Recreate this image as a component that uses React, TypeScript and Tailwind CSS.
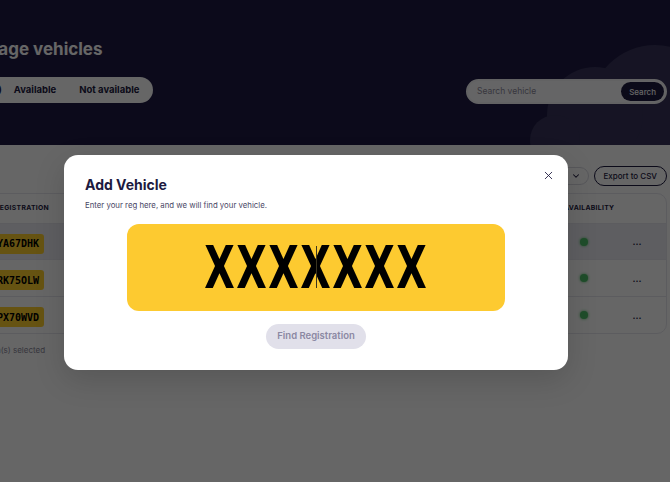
import { ChevronDown, X } from 'lucide-react';

const vehicles = [
  { reg: 'YA67DHK', active: true },
  { reg: 'RK75OLW', active: false },
  { reg: 'PX70WVD', active: false },
];

function Cloud() {
  return (
    <svg className="absolute bottom-0 right-0" width="140" height="100" viewBox="0 0 140 100">
      <g fill="#37345a">
        <circle cx="125" cy="65" r="65" />
        <circle cx="65" cy="70" r="48" />
        <circle cx="25" cy="95" r="25" />
      </g>
    </svg>
  );
}

function Header() {
  return (
    <div className="relative h-[145px] bg-[#1f1a44]">
      <Cloud />
      <div className="relative -ml-[38px] pt-[37px] pr-[3px]">
        <h1 className="text-[17px] font-bold leading-[24px] text-white">Manage vehicles</h1>
        <div className="mt-[15px] flex items-center justify-between">
          <div className="-ml-[4px] flex h-[26px] items-center gap-[23px] rounded-full bg-white pl-[16px] pr-[14px] text-[9.5px] font-bold text-[#1d1a3f]">
            <span className="-mr-[11px]">All (3)</span>
            <span>Available</span>
            <span>Not available</span>
          </div>
          <div className="mt-[3px] flex h-[25px] w-[201px] items-center justify-between rounded-full border-2 border-[#f4f4f8] bg-[#fdfdff] pl-[9px] pr-[1px]">
            <span className="text-[8.5px] text-[#8d8b9c]">Search vehicle</span>
            <button className="h-[19px] rounded-full bg-[#1d1a3f] px-[8px] text-[8px] font-medium text-white">Search</button>
          </div>
        </div>
      </div>
    </div>
  );
}

function VehicleTable() {
  return (
    <div className="-ml-[40px] mr-[3px] rounded-[10px] border border-[#e6e6ee] bg-white">
      <div className="flex h-[29px] items-center text-[6.8px] font-bold tracking-[0.3px] text-[#1d1a3f]">
        <div className="flex-1 pl-[34px]">REGISTRATION</div>
        <div className="w-[50px]">AVAILABILITY</div>
        <div className="w-[46px]" />
        <div className="w-[6px]" />
      </div>
      {vehicles.map((v, i) => (
        <div
          key={v.reg}
          className={`flex items-center border-t border-[#e6e6ee] ${i === 0 ? 'h-[36px] bg-[#ececf3]' : 'h-[37px]'}`}
        >
          <div className="flex-1 pl-[31px]">
            <span className="inline-flex h-[20px] items-center rounded-[3px] bg-[#ffd02f] px-[5px] font-['DejaVu_Sans_Mono',monospace] text-[10px] font-bold text-black">
              {v.reg}
            </span>
          </div>
          <div className="w-[50px] pl-[16px]">
            <div className="h-[8px] w-[8px] rounded-full bg-[#4fc06a] shadow-[0_0_3px_#4fc06a]" />
          </div>
          <div className="flex w-[46px] justify-center text-[9px] font-bold leading-none text-[#1d1a3f]">...</div>
          <div className="w-[6px]" />
        </div>
      ))}
    </div>
  );
}

function Content() {
  return (
    <div className="bg-white pt-[21px]">
      <div className="flex h-[20px] items-center justify-end gap-[5px] pr-[3px]">
        <div className="flex h-[18px] w-[110px] items-center justify-end rounded-full border border-[#d9d9e2] pr-[7px] text-[#1d1a3f]">
          <ChevronDown size={10} strokeWidth={2.5} />
        </div>
        <button className="h-[20px] rounded-full border border-[#1d1a3f] px-[9px] text-[8px] font-medium text-[#1d1a3f]">
          Export to CSV
        </button>
      </div>
      <div className="mt-[7px]">
        <VehicleTable />
      </div>
      <div className="-ml-[21px] mt-[10px] text-[8px] text-[#8a889a]">1 item(s) selected</div>
      <div className="h-[120px]" />
    </div>
  );
}

function AddVehicleModal() {
  return (
    <div className="relative h-[215px] w-[504px] rounded-[14px] bg-white px-[21px] pt-[20px] shadow-[0_10px_30px_rgba(0,0,0,0.15)]">
      <button className="absolute right-[13px] top-[14px] text-[#1d1a3f]">
        <X size={13} strokeWidth={1.6} />
      </button>
      <h2 className="text-[14px] font-bold leading-[20px] text-[#1d1a3f]">Add Vehicle</h2>
      <p className="mt-[4px] text-[7.8px] leading-[12px] text-[#4a4766]">
        Enter your reg here, and we will find your vehicle.
      </p>
      <div className="relative mx-auto mt-[13px] flex h-[87px] w-[378px] items-center justify-center rounded-[12px] bg-[#fdca30]">
        <span className="inline-block scale-x-[0.745] font-['DejaVu_Sans_Condensed','DejaVu_Sans',sans-serif] text-[59px] font-bold leading-none tracking-[2px] text-black">
          XXXXXXX
        </span>
        <span className="absolute left-1/2 top-[22px] h-[42px] w-px bg-[#3a3520]" />
      </div>
      <div className="mt-[13px] flex justify-center">
        <button className="h-[25px] rounded-full bg-[#e1e0ea] px-[11px] text-[9.5px] font-semibold text-[#8b88a3]">
          Find Registration
        </button>
      </div>
    </div>
  );
}

export default function App() {
  return (
    <div className="relative h-[482px] w-[670px] overflow-hidden bg-white font-['Inter',sans-serif]">
      <Header />
      <Content />
      <div className="absolute inset-0 flex items-start bg-black/60 pl-[64px] pt-[155px]">
        <AddVehicleModal />
      </div>
    </div>
  );
}
